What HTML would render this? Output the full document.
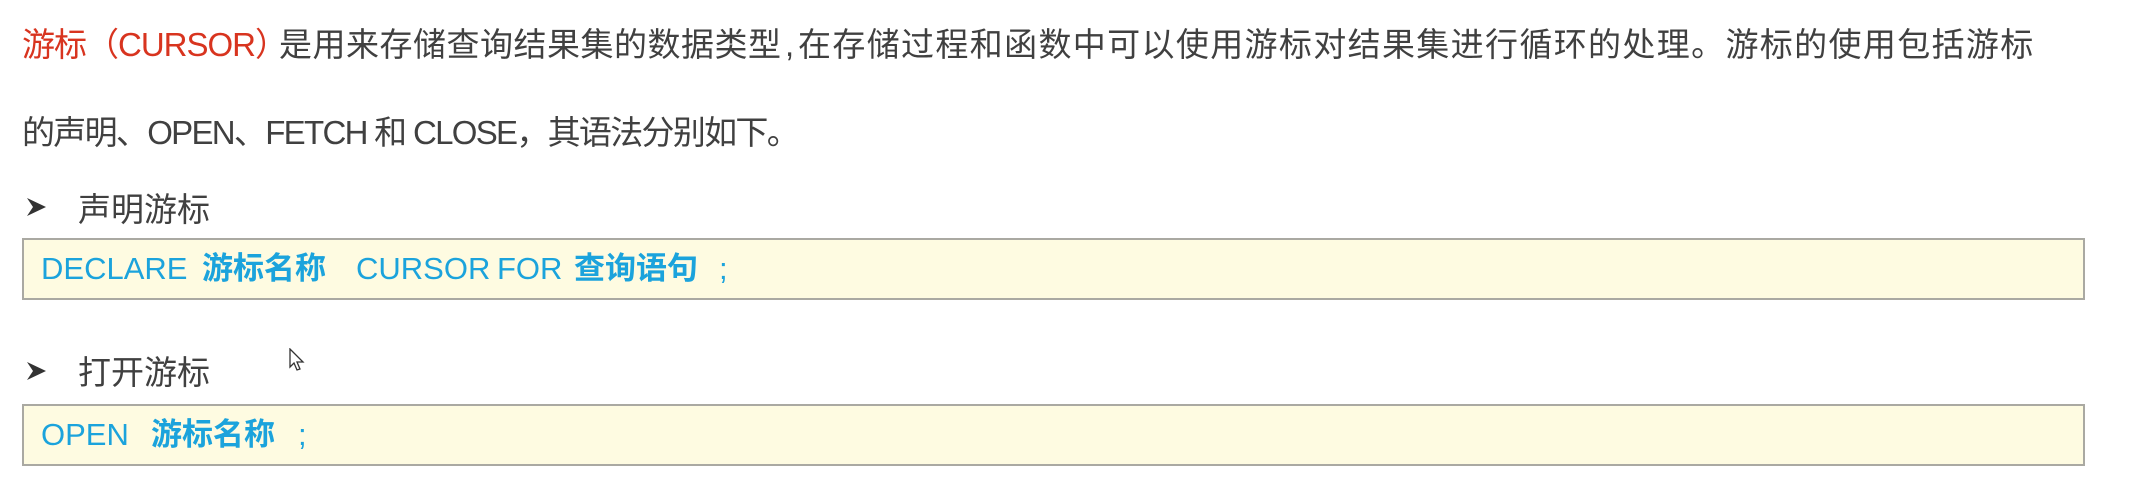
<!DOCTYPE html>
<html><head><meta charset="utf-8"><style>
body{margin:0;width:2143px;height:498px;background:#fff;position:relative;overflow:hidden;font-family:"Liberation Sans","Noto Sans CJK SC",sans-serif;}
.a{position:absolute;white-space:nowrap;line-height:1;}
.t{font-size:33px;color:#404040;}
.r{color:#d8341f;}
.box{position:absolute;left:22px;width:2063px;background:#fefbe1;border:2px solid #aaa9a2;box-sizing:border-box;}
.b{font-size:31px;color:#1ba3dc;}
.bb{font-weight:bold;}
</style></head><body>
<div class="a t r" style="left:22px;top:28px;letter-spacing:-1px;">游标（CURSOR）</div>
<div class="a t" style="left:279px;top:28px;letter-spacing:0.5px;">是用来存储查询结果集的数据类型</div>
<div class="a t" style="left:785px;top:28px;">,</div>
<div class="a t" style="left:798px;top:28px;letter-spacing:1.35px;">在存储过程和函数中可以使用游标对结果集进行循环的处理。游标的使用包括游标</div>
<div class="a t" style="left:22px;top:116px;letter-spacing:-1.7px;">的声明、OPEN、FETCH 和 CLOSE，其语法分别如下。</div>
<svg class="a" style="left:26px;top:196px;" width="22" height="22" viewBox="0 0 22 22"><path d="M1 2 L20 11 L1 20 L7 11 Z" fill="#333"/></svg>
<div class="a t" style="left:78px;top:193px;">声明游标</div>
<div class="box" style="top:238px;height:62px;"></div>
<div class="a b" style="left:41px;top:253px;">DECLARE</div>
<div class="a b bb" style="left:202px;top:253px;">游标名称</div>
<div class="a b" style="left:356px;top:253px;">CURSOR</div>
<div class="a b" style="left:497px;top:253px;">FOR</div>
<div class="a b bb" style="left:574px;top:253px;">查询语句</div>
<div class="a b" style="left:719px;top:253px;">;</div>
<svg class="a" style="left:26px;top:360px;" width="22" height="22" viewBox="0 0 22 22"><path d="M1 2 L20 11 L1 20 L7 11 Z" fill="#333"/></svg>
<div class="a t" style="left:78px;top:356px;">打开游标</div>
<svg class="a" style="left:289px;top:348px;" width="16" height="24" viewBox="0 0 16 24"><path d="M1 1 L1 19 L5 15 L8 22 L11 21 L8 14 L14 14 Z" fill="#fff" stroke="#333" stroke-width="1.3"/></svg>
<div class="box" style="top:404px;height:62px;"></div>
<div class="a b" style="left:41px;top:419px;">OPEN</div>
<div class="a b bb" style="left:151px;top:419px;">游标名称</div>
<div class="a b" style="left:298px;top:419px;">;</div>
</body></html>
